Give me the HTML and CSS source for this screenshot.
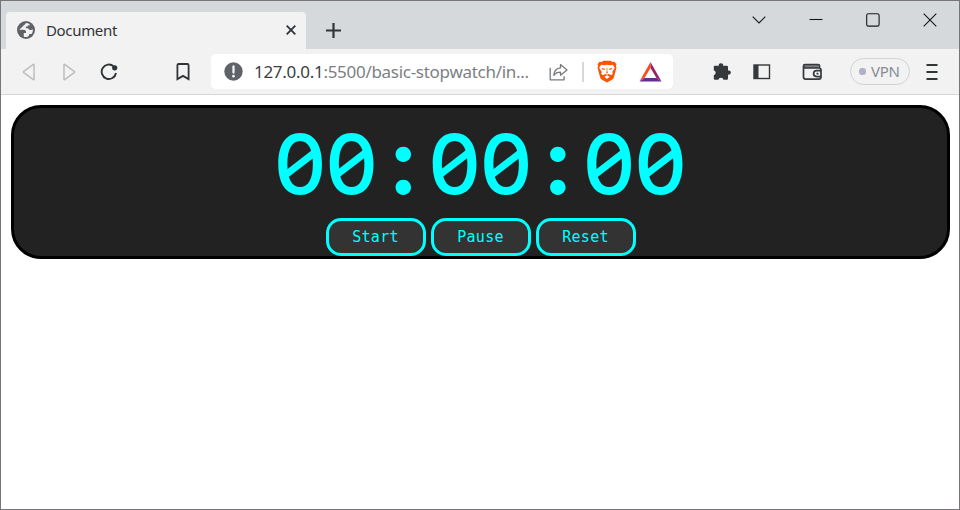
FILE: index.html
```html
<!DOCTYPE html>
<html lang="en">
<head>
<meta charset="utf-8">
<title>Document</title>
<link rel="stylesheet" href="styles.css">
</head>
<body>
<div class="window">
  <header class="tabs">
    <div class="tab">
      <svg class="globe" width="18" height="18" viewBox="0 0 18 18"><circle cx="9" cy="9" r="9" fill="#5f6368"/><path d="M9.8 2C8 2 8.4 4 6.7 4.4c-1.5.3-.6 1.8-2.1 2.2L2.1 8.7h4.4c2 0 2.5 1.2 2.5 2.1v1.3H6.8v3.6c2 .7 4.1.1 5.2-1l.2-1.6h2.4c1-1.4 1.4-3 1.2-4.8-1.1.9-2.6 1-3.8.2L11 7.2H8.8V5.4h2.1V4.2h2.4C12.4 3 11.3 2.2 9.8 2Z" fill="#f2f2f2"/></svg>
      <span class="title">Document</span>
      <svg class="close" width="10" height="10" viewBox="0 0 10 10"><path d="M.7.7l8.6 8.6M9.3.7.7 9.3" stroke="#303437" stroke-width="1.8"/></svg>
    </div>
    <svg class="plus" width="15" height="15" viewBox="0 0 15 15"><path d="M7.5 0v15M0 7.5h15" stroke="#303437" stroke-width="2.2"/></svg>
    <div class="controls">
      <svg width="14" height="14" viewBox="0 0 14 14"><path d="M.7 3.7 7 10l6.3-6.3"/></svg>
      <svg width="14" height="14" viewBox="0 0 14 14"><path d="M.5 6.5h13"/></svg>
      <svg width="14" height="14" viewBox="0 0 14 14"><rect x=".7" y=".7" width="12.4" height="12.4" rx="1.7"/></svg>
      <svg width="14" height="14" viewBox="0 0 14 14"><path d="m.7.7 12.6 12.6m0-12.6L.7 13.3"/></svg>
    </div>
  </header>
  <nav class="toolbar">
    <svg class="back" width="14" height="18" viewBox="0 0 14 18"><path d="M12 1.7v14.6q0 .7-.7.3L1.8 9.6q-.7-.6 0-1.2l9.5-7q.7-.4.7.3Z" fill="none" stroke="#bcbec0" stroke-width="1.5"/></svg>
    <svg class="forward" width="14" height="18" viewBox="0 0 14 18"><path d="M2 1.7v14.6q0 .7.7.3l9.5-7q.7-.6 0-1.2l-9.5-7Q2 1 2 1.7Z" fill="none" stroke="#bcbec0" stroke-width="1.5"/></svg>
    <svg class="reload" width="18" height="18" viewBox="0 0 18 18"><path d="M13.7 3.4A7.2 7.2 0 1 0 16 10" fill="none" stroke="#303437" stroke-width="1.9"/><circle cx="14.7" cy="4.8" r="2.6" fill="#303437"/></svg>
    <svg class="bookmark" width="14" height="18" viewBox="0 0 14 18"><path d="M1.4 2.3Q1.4 1 2.7 1h8.6q1.3 0 1.3 1.3v13.8L7 12.9l-5.6 3.2Z" fill="none" stroke="#303437" stroke-width="1.8"/></svg>
    <div class="address">
      <svg class="info" width="19" height="19" viewBox="0 0 19 19"><circle cx="9.5" cy="9.5" r="9.2" fill="#5f6368"/><path d="M9.5 4.5v6" stroke="#f2f2f2" stroke-width="2.3" stroke-linecap="round"/><circle cx="9.5" cy="14.2" r="1.4" fill="#f2f2f2"/></svg>
      <span class="url"><b>127.0.0.1</b>:5500/basic-stopwatch/in...</span>
      <svg class="share" width="20" height="18" viewBox="0 0 20 18"><path d="M1.2 4.8v12h13.9v-3.5M11.5 1.6v3.2C7 5.2 5.1 8 4.8 12.3c1.5-2.2 3.5-3.2 6.7-3.2v3.2L18 6.9Z" fill="none" stroke="#777a7d" stroke-width="1.3" stroke-linejoin="round"/></svg>
      <i class="divider"></i>
      <svg class="lion" width="20" height="23" viewBox="0 0 20 24" preserveAspectRatio="none"><path d="m4.5 2 2-1.3h7l2 1.3 2-.1 2 2.5-.7 1.5.7 2-2.5 9.8q-.5 2-2 3L10 23.5l-5-2.8q-1.5-1-2-3L.5 7.9l.7-2-.7-1.5 2-2.5Z" fill="#fb5404"/><path d="m4.2 5 3.1.5L10 5l2.7.5 3.1-.5 2 3.2-2.6 4.2.7 1.9-1.9 1.6-2.2-1.2-1.8.7-1.8-.7L6 15.9l-1.9-1.6.7-1.9-2.6-4.2Zm5.8 11 2.7 1.5-2.7 2.2-2.7-2.2Z" fill="#fff"/><path d="m4.4 8.4 3.8.8-.5 1-2.3-.4Zm11.2 0-3.8.8.5 1 2.3-.4ZM9.6 8h.8l-.1 3.4.5 2-.8.9-.8-.9.5-2Z" fill="#fb5404"/></svg>
      <svg class="bat" width="23" height="20" viewBox="0 0 24 20" preserveAspectRatio="none"><path d="M12 0v6L5.7 16 .5 19.5Z" fill="#ff4724"/><path d="m12 0 11.5 19.5-5.2-3.5L12 6Z" fill="#9e1f63"/><path d="M.5 19.5 5.7 16h12.6l5.2 3.5Z" fill="#662d91"/></svg>
    </div>
    <svg class="puzzle" width="19" height="19" viewBox="0 0 19 19"><path d="M1.6 3.8h4.2a2.2 2.2 0 1 1 4.3 0h3.7q1.2 0 1.2 1.2v3.5h.8a2.1 2.1 0 1 1 0 4.2H15v3.9q0 1.2-1.2 1.2h-3.3a2.6 2.6 0 0 0-5.1 0H2q-1.2 0-1.2-1.2v-3.3a2.6 2.6 0 0 0 0-5V4.6q0-.8.8-.8Z" fill="#35393c"/></svg>
    <svg class="sidebar" width="18" height="16" viewBox="0 0 18 16"><rect x="1" y="1" width="15.5" height="13.5" fill="none" stroke="#35393c" stroke-width="1.4"/><path d="M1 1h4.5v14H1Z" fill="#35393c"/></svg>
    <svg class="wallet" width="21" height="18" viewBox="0 0 21 18"><path d="M2 2h14.5v3H2Z" fill="#777b7e"/><path d="M17.5 5V2.8Q17.5 1.5 16 1.5H3Q1.5 1.5 1.5 3v11q0 2.2 2.2 2.2h13.1q2.2 0 2.2-2.2V7.2Q19 5 16.8 5H3Q1.5 5 1.5 3M19 7.6h-4.4a3 3 0 0 0 0 6H19M14.5 10.6h2" fill="none" stroke="#35393c" stroke-width="1.7"/></svg>
    <div class="vpn"><i></i><span>VPN</span></div>
    <svg class="menu" width="12" height="16" viewBox="0 0 12 16"><path d="M.5 1h11M.5 8h11M.5 15h11" stroke="#303437" stroke-width="1.8"/></svg>
  </nav>
  <main class="stopwatch">
    <div class="time"><span class="digit">0</span><span class="digit">0</span><span class="colon">:</span><span class="digit">0</span><span class="digit">0</span><span class="colon">:</span><span class="digit">0</span><span class="digit">0</span></div>
    <div class="buttons"><button>Start</button><button>Pause</button><button>Reset</button></div>
  </main>
</div>
</body>
</html>
```
FILE: styles.css
```css
* { box-sizing: border-box; }
body { margin: 0; background: #fff; font-family: "Noto Sans", sans-serif; }
svg { display: block; flex: none; }
.window { width: 960px; height: 510px; border: 1px solid #777579; overflow: hidden; }
.tabs { height: 48px; background: #d5d9dc; display: flex; align-items: flex-start; padding-left: 5px; }
.tab { width: 300px; height: 37px; margin-top: 11px; background: #f2f2f2; border-radius: 4px 4px 0 0; display: flex; align-items: center; padding: 0 10px 2px 11px; }
.title { margin-left: 11px; font-size: 15px; line-height: 20px; color: #303437; letter-spacing: -.33px; }
.close { margin-left: auto; }
.plus { margin: 22px 0 0 20px; }
.controls { margin: 12px 22px 0 auto; display: flex; gap: 43px; }
.controls svg { fill: none; stroke: #17191a; stroke-width: 1.1; }
.toolbar { height: 46px; background: #f2f2f2; border-bottom: 1px solid #d5d7d9; display: flex; align-items: center; padding-left: 21px; }
.forward { margin-left: 26px; }
.reload { margin-left: 24px; }
.bookmark { margin-left: 58px; }
.address { width: 462px; height: 35px; margin-left: 21px; background: #fff; border-radius: 5px; display: flex; align-items: center; padding-left: 13px; }
.url { width: 277px; margin-left: 11px; font-size: 17px; letter-spacing: -.29px; white-space: nowrap; color: #7d8083; }
.url b { font-weight: 400; color: #3c4043; }
.share { margin-left: 18px; }
.divider { width: 2px; height: 20px; margin-left: 13px; background: #d6d8da; }
.lion { margin-left: 13px; }
.bat { margin-left: 22px; }
.puzzle { margin-left: 40px; }
.sidebar { margin-left: 21px; }
.wallet { margin-left: 31px; }
.vpn { width: 60px; height: 27px; margin-left: 27px; border: 1px solid #cfd2d6; border-radius: 14px; display: flex; align-items: center; padding-left: 8px; color: #878b94; font-size: 15px; }
.vpn i { width: 7px; height: 7px; border-radius: 3px; background: #afb1c6; }
.vpn span { margin-left: 5px; padding-bottom: 2px; letter-spacing: -.3px; }
.menu { margin-left: 16px; }
.stopwatch { width: 939px; height: 154px; margin: 10px 0 0 10px; border: 3px solid #000; border-radius: 30px; background: #222; color: #0ff; }
.time { height: 110px; padding-top: 1px; display: flex; justify-content: center; font: 500 83px/110px Inter, sans-serif; font-feature-settings: "tnum"; }
.time span { width: 51.5px; height: 110px; display: flex; justify-content: center; }
.digit { position: relative; }
.digit::after { content: ""; position: absolute; left: 8px; top: 51px; width: 35px; height: 7.4px; background: #0ff; transform: rotate(-37.5deg); }
.time .colon { font-size: 91px; font-weight: 700; margin-top: -3px; }
.buttons { display: flex; justify-content: center; gap: 5px; }
button { width: 100px; height: 38px; padding: 0; border: 3px solid #0ff; border-radius: 15px; background: #333; color: #0ff; font: 15px/20px "DejaVu Sans Mono", monospace; letter-spacing: .25px; }
```
